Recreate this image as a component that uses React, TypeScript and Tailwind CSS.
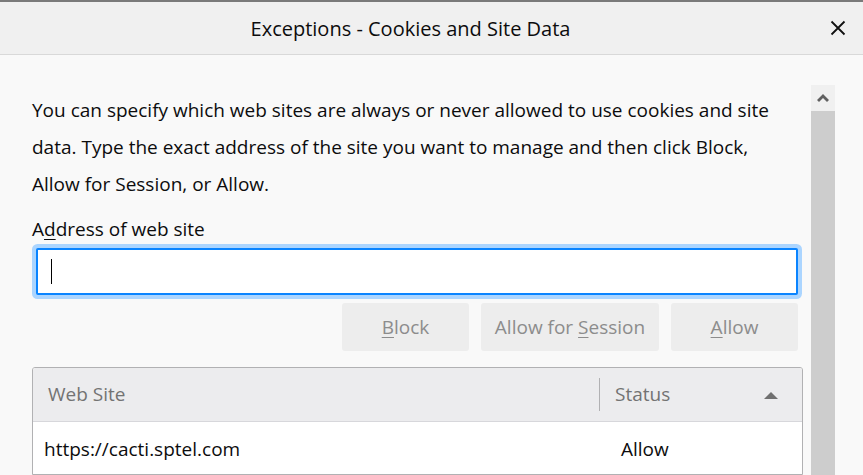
import React from 'react';

const font = "font-['Open_Sans','Noto_Sans',sans-serif]";

const ActionButton: React.FC<{ width: string; pre: string; key_: string; post: string }> = ({ width, pre, key_, post }) => (
  <div className={`${width} h-[48px] rounded-[3px] bg-[#ededed] flex items-center justify-center text-[19px] text-[#8c8c8c]`}>
    <span>
      {pre}
      <span className="underline underline-offset-[3px] decoration-1">{key_}</span>
      {post}
    </span>
  </div>
);

export default function App() {
  return (
    <div className={`w-[863px] h-[475px] overflow-hidden bg-[#f9f9f9] text-[#0c0c0d] ${font} flex flex-col`}>
      {/* title bar */}
      <div className="h-[55px] shrink-0 bg-[#f0f0f0] border-t-2 border-[#7a7a7a] border-b border-b-[#d9d9d9] flex items-center">
        <div className="flex-1 text-center text-[20px] leading-[26px] pt-[1px]">Exceptions - Cookies and Site Data</div>
        <div className="w-[42px] flex items-center pl-[9px]">
          <svg width="16" height="16" viewBox="0 0 16 16">
            <path d="M1.5 1.5 L14.5 14.5 M14.5 1.5 L1.5 14.5" stroke="#111" strokeWidth="1.8" fill="none" />
          </svg>
        </div>
      </div>

      <div className="flex flex-1 min-h-0">
        {/* content */}
        <div className="w-[811px] shrink-0 pl-[32px] pr-[8px] pt-[37px] flex flex-col">
          <p className="text-[19px] leading-[37px]">
            You can specify which web sites are always or never allowed to use cookies and site
            <br />
            data. Type the exact address of the site you want to manage and then click Block,
            <br />
            Allow for Session, or Allow.
          </p>

          <div className="mt-[14px] text-[19px] leading-[24px]">
            A<span className="underline underline-offset-[3px] decoration-1">d</span>dress of web site
          </div>

          <div className="mt-[7px] ml-[4px] w-[762px] h-[47px] bg-white border-2 border-[#0a84ff] rounded-[2px] shadow-[0_0_0_4px_#abd5ff] flex items-center pl-[13px]">
            <div className="w-[1px] h-[25px] bg-black" />
          </div>

          <div className="mt-[8px] mr-[5px] flex justify-end gap-[12px]">
            <ActionButton width="w-[127px]" pre="" key_="B" post="lock" />
            <ActionButton width="w-[178px]" pre="Allow for " key_="S" post="ession" />
            <ActionButton width="w-[127px]" pre="" key_="A" post="llow" />
          </div>

          <div className="mt-[16px] border border-[#b1b1b3] rounded-t-[3px] bg-white flex-1 overflow-hidden">
            <div className="h-[54px] bg-[#ececee] border-b border-[#d7d7db] flex items-center text-[19px] text-[#737373]">
              <div className="w-[566px] pl-[15px]">Web Site</div>
              <div className="w-[1px] h-[33px] bg-[#b1b1b3]" />
              <div className="flex-1 flex items-center justify-between pl-[15px] pr-[24px]">
                <span>Status</span>
                <svg width="14" height="8" viewBox="0 0 14 8">
                  <path d="M0 8 L7 1 L14 8 Z" fill="#707070" />
                </svg>
              </div>
            </div>
            <div className="h-[54px] flex items-center text-[19px]">
              <div className="w-[567px] pl-[11px]">https://cacti.sptel.com</div>
              <div className="pl-[21px]">Allow</div>
            </div>
          </div>
        </div>

        {/* scrollbar */}
        <div className="w-[24px] shrink-0 pt-[30px] flex flex-col">
          <div className="h-[26px] bg-[#f0f0f0] flex items-center justify-center">
            <svg width="12" height="8" viewBox="0 0 12 8">
              <path d="M6 0 L12 6 L10 8 L6 4 L2 8 L0 6 Z" fill="#606060" />
            </svg>
          </div>
          <div className="flex-1 bg-[#cdcdcd]" />
        </div>
      </div>
    </div>
  );
}
